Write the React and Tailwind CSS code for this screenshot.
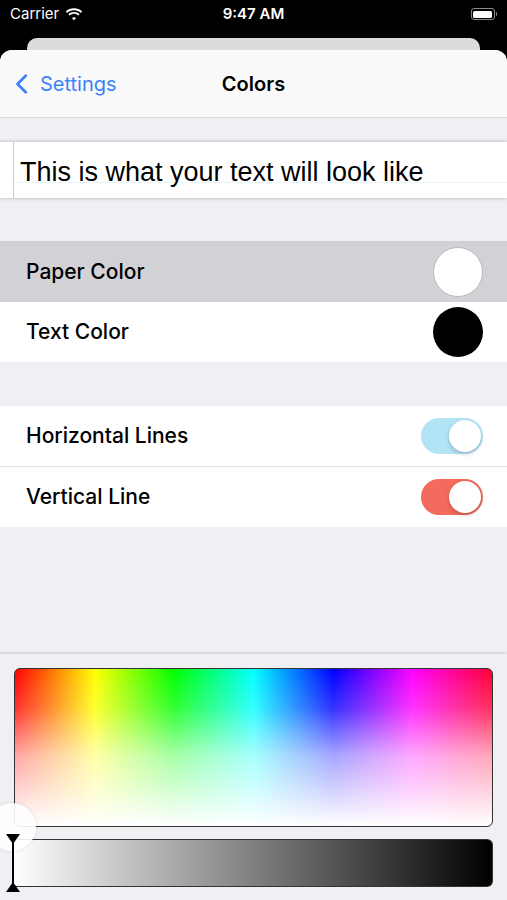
import { FaChevronLeft } from "react-icons/fa6";

const font = { fontFamily: "Inter, 'Liberation Sans', sans-serif" };

const Toggle = ({ color }) => (
  <div className={`w-[62px] h-[36px] rounded-full ${color} flex items-center justify-end p-[2px]`}>
    <div className="w-[32px] h-[32px] rounded-full bg-white shadow-[0_2px_4px_rgba(0,0,0,0.2)]" />
  </div>
);

const App = () => {
  return (
    <div className="w-[507px] h-[900px] bg-black flex flex-col overflow-hidden" style={font}>
      {/* status bar */}
      <div className="h-[38px] flex items-start pt-[4px] justify-between px-[10px] text-white relative">
        <div className="flex items-center gap-[6px] text-[15px] h-[20px]">
          <span>Carrier</span>
          <svg width="18" height="13" viewBox="0 0 18 13" fill="white">
            <path d="M9 2.2c2.7 0 5.1 1 6.9 2.7l1.3-1.4C15.1 1.5 12.2.3 9 .3S2.9 1.5.8 3.5l1.3 1.4C3.9 3.2 6.3 2.2 9 2.2z" />
            <path d="M9 5.8c1.7 0 3.2.6 4.3 1.7l1.3-1.4C13.2 4.7 11.2 3.9 9 3.9S4.8 4.7 3.4 6.1l1.3 1.4C5.8 6.4 7.3 5.8 9 5.8z" />
            <path d="M9 9.2c.8 0 1.5.3 2 .8L9 12.2 7 10c.5-.5 1.2-.8 2-.8z" />
          </svg>
        </div>
        <span className="absolute left-1/2 -translate-x-1/2 top-[4px] h-[20px] flex items-center text-[15px] font-semibold">9:47 AM</span>
        <div className="flex items-center h-[20px]">
          <div className="w-[24px] h-[12px] rounded-[3px] border border-[#8a8a8a] p-[1.5px]">
            <div className="w-full h-full rounded-[1.5px] bg-white" />
          </div>
          <div className="w-[1.5px] h-[4px] bg-[#8a8a8a] rounded-r-sm ml-[1px]" />
        </div>
      </div>
      <div className="mx-[27px] h-[12px] bg-[#dcdcdc] rounded-t-[10px]" />
      {/* sheet */}
      <div className="flex-1 flex flex-col rounded-t-[12px] overflow-hidden bg-[#efeff4]">
        <div className="h-[68px] bg-[#f9f9f9] border-b border-[#d9d9dc] flex items-center relative px-[15px]">
          <div className="flex items-center gap-[9px] text-[#3a82f6] text-[20px]">
            <FaChevronLeft className="w-[16px] h-[22px]" />
            <span>Settings</span>
          </div>
          <span className="absolute left-1/2 -translate-x-1/2 text-[20px] font-semibold text-black">Colors</span>
        </div>

        {/* preview */}
        <div className="mt-[24px] h-[56px] bg-white shadow-[0_-1px_3px_rgba(0,0,0,0.15),0_1px_3px_rgba(0,0,0,0.15)] flex">
          <div className="ml-[13px] w-px bg-[#f5b5b5]" />
          <div className="flex-1 flex flex-col">
            <div className="h-[41px] border-b border-[#e6f4f4] flex items-end pl-[6px]">
              <span className="text-[27px] leading-none text-black -mb-[4px]" style={{ fontFamily: "'Liberation Sans', Arial, sans-serif" }}>
                This is what your text will look like
              </span>
            </div>
          </div>
        </div>

        {/* color rows */}
        <div className="mt-[43px] flex flex-col">
          <div className="h-[61px] bg-[#d1d1d6] flex items-center justify-between pl-[26px] pr-[24px]">
            <span className="text-[21px] font-medium text-black">Paper Color</span>
            <div className="w-[50px] h-[50px] rounded-full bg-white border border-[#b9b9bd]" />
          </div>
          <div className="h-[60px] bg-white flex items-center justify-between pl-[26px] pr-[24px]">
            <span className="text-[21px] font-medium text-black">Text Color</span>
            <div className="w-[50px] h-[50px] rounded-full bg-black" />
          </div>
        </div>

        {/* toggles */}
        <div className="mt-[44px] bg-white flex flex-col">
          <div className="h-[61px] flex items-center justify-between pl-[26px] pr-[24px] border-b border-[#e4e4e8]">
            <span className="text-[21px] font-medium text-black">Horizontal Lines</span>
            <Toggle color="bg-[#b2e4f6]" />
          </div>
          <div className="h-[60px] flex items-center justify-between pl-[26px] pr-[24px]">
            <span className="text-[21px] font-medium text-black">Vertical Line</span>
            <Toggle color="bg-[#f26b5d]" />
          </div>
        </div>

        <div className="flex-1" />

        {/* color picker */}
        <div className="h-[246px] bg-[#f0f0f4] shadow-[0_-1px_3px_rgba(0,0,0,0.18)] flex flex-col px-[14px] pt-[14px] pb-[13px] gap-[12px] relative">
          <div className="h-[159px] rounded-[6px] border border-[#333] bg-[linear-gradient(to_bottom,rgba(255,255,255,0)_0%,rgba(255,255,255,0.2)_25%,rgba(255,255,255,0.65)_55%,rgba(255,255,255,1)_100%),linear-gradient(to_right,#ff0000_0%,#ffff00_16.7%,#00ff00_33.3%,#00ffff_50%,#0000ff_66.7%,#ff00ff_83.3%,#ff0033_100%)]" />
          <div className="h-[48px] rounded-r-[6px] border border-[#333] border-l-0 bg-[linear-gradient(to_right,#ffffff_0%,#808080_50%,#000000_100%)]" />
          {/* thumb */}
          <div className="absolute left-[-12px] top-[149px] w-[48px] h-[48px] rounded-full bg-white/90 shadow-[0_0_3px_rgba(0,0,0,0.15)]" />
          <svg className="absolute left-[6px] top-[180px]" width="14" height="58" viewBox="0 0 14 58">
            <path d="M0 0h14L7 10z" fill="black" />
            <rect x="6" y="2" width="2" height="52" fill="black" />
            <path d="M0 58h14L7 48z" fill="black" />
          </svg>
        </div>
      </div>
    </div>
  );
};

export default App;
